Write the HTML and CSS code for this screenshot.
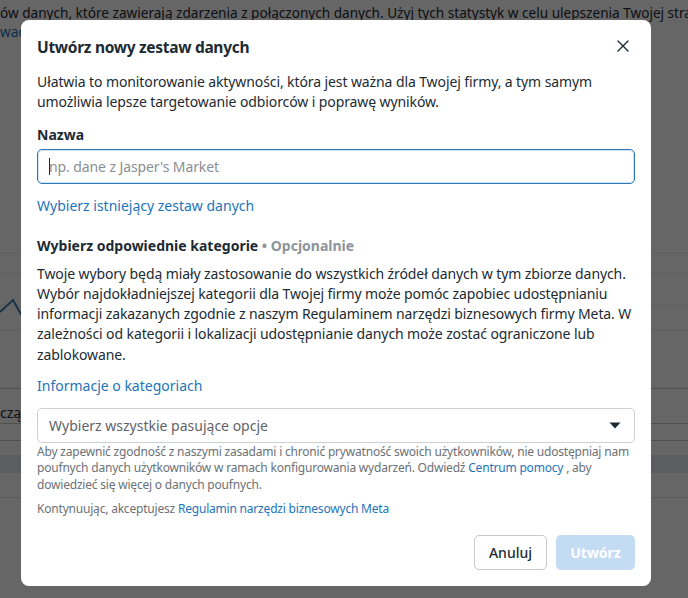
FILE: index.html
```html
<!DOCTYPE html>
<html lang="pl">
<head>
<meta charset="utf-8">
<title>Utwórz nowy zestaw danych</title>
<link rel="stylesheet" href="styles.css">
</head>
<body>
<div class="page">
  <div class="bg-intro">
    <p class="bg-line">ów danych, które zawierają zdarzenia z połączonych danych. Użyj tych statystyk w celu ulepszenia Twojej stra</p>
    <p class="bg-line bg-link">wach</p>
  </div>
  <div class="bg-chart">
    <svg class="chart" width="688" height="344" viewBox="0 0 688 344">
      <line x1="0" y1="209" x2="688" y2="209" class="grid"/>
      <line x1="0" y1="229" x2="688" y2="229" class="grid"/>
      <line x1="0" y1="261" x2="688" y2="261" class="grid"/>
      <line x1="0" y1="286" x2="688" y2="286" class="grid2"/>
      <polyline points="0,268 13,256 22,272" class="series"/>
    </svg>
  </div>
  <div class="bg-table">
    <div class="bg-row r1"><span class="bg-cell">cząc</span></div>
    <div class="bg-row r2"></div>
    <div class="bg-row r3"></div>
    <div class="bg-row band"></div>
    <div class="bg-row r4"></div>
    <div class="bg-row r5"></div>
  </div>
</div>
<div class="overlay"></div>
<div class="dialog" role="dialog" aria-labelledby="dlg-title">
  <div class="dlg-head">
    <h2 id="dlg-title" class="dlg-title">Utwórz nowy zestaw danych</h2>
    <button class="close" aria-label="Zamknij">
      <svg width="12" height="12" viewBox="0 0 12 12"><path d="M1 1 L11 11 M11 1 L1 11" stroke="#1c2b33" stroke-width="1.4" stroke-linecap="round" fill="none"/></svg>
    </button>
  </div>
  <div class="dlg-body">
    <p class="text intro">Ułatwia to monitorowanie aktywności, która jest ważna dla Twojej firmy, a tym samym umożliwia lepsze targetowanie odbiorców i poprawę wyników.</p>
    <div class="label">Nazwa</div>
    <div class="input focused"><span class="caret"></span><span class="ph">np. dane z Jasper's Market</span></div>
    <a class="link block-link">Wybierz istniejący zestaw danych</a>
    <h3 class="section">Wybierz odpowiednie kategorie <span class="opt">• Opcjonalnie</span></h3>
    <p class="text cat-text">Twoje wybory będą miały zastosowanie do wszystkich źródeł danych w tym zbiorze danych. Wybór najdokładniejszej kategorii dla Twojej firmy może pomóc zapobiec udostępnianiu informacji zakazanych zgodnie z naszym Regulaminem narzędzi biznesowych firmy Meta. W zależności od kategorii i lokalizacji udostępnianie danych może zostać ograniczone lub zablokowane.</p>
    <a class="link block-link info-link">Informacje o kategoriach</a>
    <div class="select">
      <span class="select-ph">Wybierz wszystkie pasujące opcje</span>
      <svg class="tri" width="12" height="7" viewBox="0 0 12 7"><path d="M0.5 0.5 H11.5 L6 6.5 Z" fill="#1c2b33"/></svg>
    </div>
    <p class="help">Aby zapewnić zgodność z naszymi zasadami i chronić prywatność swoich użytkowników, nie udostępniaj nam poufnych danych użytkowników w ramach konfigurowania wydarzeń. Odwiedź <a class="link">Centrum pomocy</a> , aby dowiedzieć się więcej o danych poufnych.</p>
    <p class="help terms">Kontynuując, akceptujesz <a class="link">Regulamin narzędzi biznesowych Meta</a></p>
  </div>
  <div class="dlg-foot">
    <button class="btn btn-secondary">Anuluj</button>
    <button class="btn btn-primary" disabled>Utwórz</button>
  </div>
</div>
</body>
</html>
```

FILE: styles.css
```css
* { box-sizing: border-box; }
html, body { margin: 0; padding: 0; }
body {
  width: 688px;
  height: 598px;
  overflow: hidden;
  position: relative;
  font-family: "Noto Sans", "Open Sans", sans-serif;
  color: #1c2b33;
  background: #ffffff;
}

/* background page */
.page { width: 688px; height: 598px; overflow: hidden; }
.bg-intro { height: 44px; padding-top: 3px; overflow: hidden; }
.bg-line {
  margin: 0;
  font-size: 13.6px;
  line-height: 19px;
  white-space: nowrap;
  color: #1c2b33;
}
.bg-link { color: #1e74b8; }
.bg-chart { height: 344px; }
.chart { display: block; }
.grid { stroke: #f0f1f3; stroke-width: 1; }
.grid2 { stroke: #e4e6e9; stroke-width: 1; }
.series { fill: none; stroke: #3b7fb8; stroke-width: 2; }
.bg-row { border-top: 1px solid #c4c7cb; }
.r1 { height: 35px; padding-top: 15px; font-size: 14px; line-height: 18px; }
.r2 { height: 17px; }
.r3 { height: 15px; }
.band { height: 18px; background: #e3e9f1; border-top: none; }
.r4 { height: 24px; border-top: none; }
.r5 { height: 60px; border-color: #e2e4e7; }

.overlay {
  position: absolute;
  inset: 0;
  background: rgba(0, 0, 0, 0.6);
}

/* dialog */
.dialog {
  position: absolute;
  left: 21px;
  top: 20px;
  width: 630px;
  height: 566px;
  background: #ffffff;
  border-radius: 8px;
  display: flex;
  flex-direction: column;
}
.dlg-head {
  display: flex;
  align-items: center;
  justify-content: space-between;
  padding: 16px 16px 0 16px;
}
.dlg-title {
  margin: 0;
  font-size: 15.5px;
  letter-spacing: -0.3px;
  line-height: 22px;
  font-weight: 700;
}
.close {
  border: 0;
  background: none;
  padding: 0;
  width: 20px;
  height: 20px;
  display: flex;
  align-items: center;
  justify-content: center;
  margin-right: 2px;
  margin-top: -2px;
}
.dlg-body {
  padding: 0 16px;
  display: flex;
  flex-direction: column;
  align-items: flex-start;
}
.text {
  margin: 0;
  font-size: 14px;
  line-height: 20.25px;
  letter-spacing: -0.1px;
}
.intro { margin-top: 14px; }
.label {
  margin-top: 12px;
  font-size: 14px;
  line-height: 20px;
  font-weight: 700;
}
.input {
  margin-top: 4px;
  width: 100%;
  height: 35px;
  border: 1px solid #2f78b8;
  box-shadow: inset 0 0 0 1px #cfe3f5;
  border-radius: 5px;
  display: flex;
  align-items: center;
  padding-left: 11px;
}
.caret {
  width: 1px;
  height: 17px;
  background: #1c2b33;
  margin-right: -1px;
}
.ph { font-size: 14px; color: #8a8f94; letter-spacing: -0.1px; }
.link { color: #1e74b8; text-decoration: none; }
.block-link {
  margin-top: 12px;
  font-size: 14px;
  line-height: 20px;
}
.section {
  margin: 20px 0 0 0;
  font-size: 14px;
  line-height: 20px;
  font-weight: 700;
}
.opt { color: #8d949b; }
.cat-text { margin-top: 8px; }
.info-link { margin-top: 11px; }
.select {
  margin-top: 12px;
  width: 100%;
  height: 35px;
  border: 1px solid #ced0d4;
  border-radius: 5px;
  display: flex;
  align-items: center;
  justify-content: space-between;
  padding: 0 13px 0 11px;
}
.select-ph { font-size: 14px; color: #5f6368; }
.help {
  margin: 1px 0 0 0;
  font-size: 12px;
  line-height: 16.5px;
  letter-spacing: -0.2px;
  color: #6b7177;
}
.terms { margin-top: 8px; }
.dlg-foot {
  margin-top: auto;
  padding: 0 16px 16px;
  display: flex;
  justify-content: flex-end;
  gap: 9px;
}
.btn {
  height: 35px;
  border-radius: 5px;
  font-family: inherit;
  font-size: 14px;
  padding: 0;
}
.btn-secondary {
  width: 73px;
  background: #ffffff;
  border: 1px solid #c6c9cd;
  color: #1c2b33;
  font-weight: 500;
}
.btn-primary {
  width: 79px;
  background: #c4dcf3;
  border: 0;
  color: #ffffff;
  font-weight: 700;
}
```
